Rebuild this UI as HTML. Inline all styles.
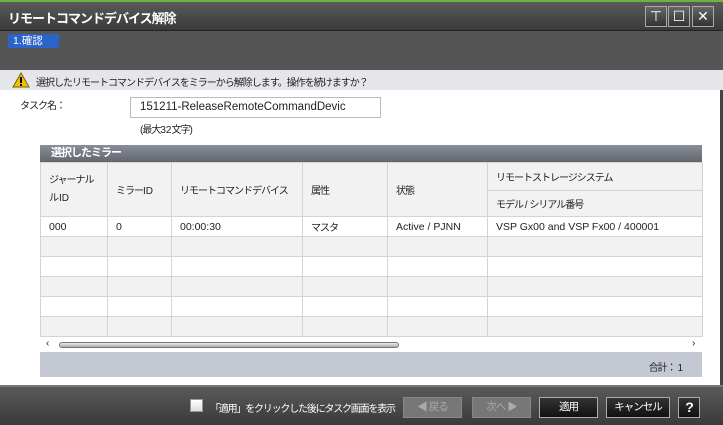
<!DOCTYPE html>
<html><head><meta charset="utf-8"><style>
*{margin:0;padding:0;box-sizing:border-box}
body{width:723px;height:425px;overflow:hidden;background:#fff;font-family:"Liberation Sans","Noto Sans CJK JP",sans-serif;font-size:10px;letter-spacing:-1px;color:#222;position:relative}
.abs{position:absolute}
.m{letter-spacing:0;font-size:10.5px}
.l{letter-spacing:0}
.tb{top:0;left:0;width:723px;height:30px;background:linear-gradient(#5a5a5a,#3a3a3a);border-top:2px solid #6cb33f}
.tb .t{left:8px;top:6px;color:#fff;font-weight:bold;font-size:13px;letter-spacing:-1px}
.wb{top:6px;width:22px;height:21px;border:1px solid #aaa;background:linear-gradient(#666,#333);color:#fff;text-align:center;font-size:14px;line-height:18px;letter-spacing:0}
.step{top:30px;left:0;width:723px;height:40px;background:#555;border-top:1px solid #222}
.warn{top:70px;left:0;width:723px;height:20px;background:#e4e6ea}
table{border-collapse:collapse;position:absolute;left:40px;top:162px;width:662px;table-layout:fixed}
td{border:1px solid #d4d4d4;height:20px;padding:0 8px;white-space:nowrap;overflow:hidden;font-size:10px}
.bb{top:385px;left:0;width:723px;height:40px;background:linear-gradient(#5a5a5a,#3a3a3a);border-top:2px solid #777}
.btn{top:397px;height:21px;border:1px solid #aaa;background:linear-gradient(#333,#111);color:#fff;text-align:center;line-height:19px;font-size:10.5px}
.dis{background:#777;color:#aaa;border-color:#888}
</style></head><body>
<div class="abs tb"><div class="abs t">リモートコマンドデバイス解除</div></div>
<div class="abs wb" style="left:645px">⊤</div>
<div class="abs wb" style="left:668px">☐</div>
<div class="abs wb" style="left:692px">✕</div>
<div class="abs step"><div class="abs m" style="left:8px;top:3px;width:51px;height:14px;background:#2a64c8;color:#fff;padding-left:5px;line-height:14px">1.確認</div></div>
<div class="abs warn">
<svg class="abs" style="left:12px;top:2px" width="18" height="16"><path d="M9 1L17 15H1Z" fill="#f2c200" stroke="#7a6000"/><rect x="8" y="5" width="2" height="6" fill="#000"/><rect x="8" y="12" width="2" height="2" fill="#000"/></svg>
<div class="abs" style="left:36px;top:4px">選択したリモートコマンドデバイスをミラーから解除します。操作を続けますか？</div></div>
<div class="abs" style="left:20px;top:97px">タスク名：</div>
<div class="abs m" style="left:130px;top:97px;width:251px;height:21px;border:1px solid #bbb;padding-left:9px;line-height:19px;font-size:11.5px">151211-ReleaseRemoteCommandDevic</div>
<div class="abs" style="left:140px;top:121px">(最大<span class="l">32</span>文字)</div>
<div class="abs" style="left:40px;top:145px;width:662px;height:17px;background:linear-gradient(#8a8e98,#62666e);color:#fff;font-weight:bold;font-size:11px;padding-left:11px;line-height:17px">選択したミラー</div>
<div class="abs" style="left:40px;top:162px;width:662px;height:190px;background:#fff"></div>
<table>
<colgroup><col style="width:67px"><col style="width:64px"><col style="width:131px"><col style="width:85px"><col style="width:100px"><col style="width:215px"></colgroup>
<tr style="background:#f2f2f2"><td rowspan="2" style="height:54px;line-height:18px;white-space:normal">ジャーナル<br><span class="l">ルID</span></td><td rowspan="2">ミラー<span class="l">ID</span></td><td rowspan="2">リモートコマンドデバイス</td><td rowspan="2">属性</td><td rowspan="2">状態</td><td style="height:28px">リモートストレージシステム</td></tr>
<tr style="background:#f2f2f2"><td style="height:26px">モデル <span class="l">/</span> シリアル番号</td></tr>
<tr><td class="m">000</td><td class="m">0</td><td class="m">00:00:30</td><td>マスタ</td><td class="m">Active / PJNN</td><td class="m">VSP Gx00 and VSP Fx00 / 400001</td></tr>
<tr style="background:#f2f2f2"><td></td><td></td><td></td><td></td><td></td><td></td></tr>
<tr><td></td><td></td><td></td><td></td><td></td><td></td></tr>
<tr style="background:#f2f2f2"><td></td><td></td><td></td><td></td><td></td><td></td></tr>
<tr><td></td><td></td><td></td><td></td><td></td><td></td></tr>
<tr style="background:#f2f2f2"><td></td><td></td><td></td><td></td><td></td><td></td></tr>
</table>
<div class="abs" style="left:46px;top:338px;font-size:10px">‹</div>
<div class="abs" style="left:59px;top:342px;width:340px;height:6px;border:1px solid #777;border-radius:3px;background:linear-gradient(#eee,#aaa)"></div>
<div class="abs" style="left:692px;top:338px;font-size:10px">›</div>
<div class="abs" style="left:40px;top:352px;width:662px;height:25px;background:#c4c8d2"><div class="abs" style="right:19px;top:7px">合計： <span class="l">1</span></div></div>
<div class="abs" style="left:720px;top:90px;width:3px;height:295px;background:#444"></div>
<div class="abs bb"></div>
<div class="abs" style="left:190px;top:399px;width:13px;height:13px;background:linear-gradient(#fff,#ddd);border:1px solid #999"></div>
<div class="abs" style="left:210px;top:400px;color:#fff;letter-spacing:-1.2px">「適用」をクリックした後にタスク画面を表示</div>
<div class="abs btn dis" style="left:403px;width:59px">◀ 戻る</div>
<div class="abs btn dis" style="left:472px;width:59px">次へ ▶</div>
<div class="abs btn" style="left:539px;width:59px">適用</div>
<div class="abs btn" style="left:606px;width:64px">キャンセル</div>
<div class="abs btn" style="left:678px;width:22px;font-weight:bold;font-size:14px">?</div>
</body></html>
